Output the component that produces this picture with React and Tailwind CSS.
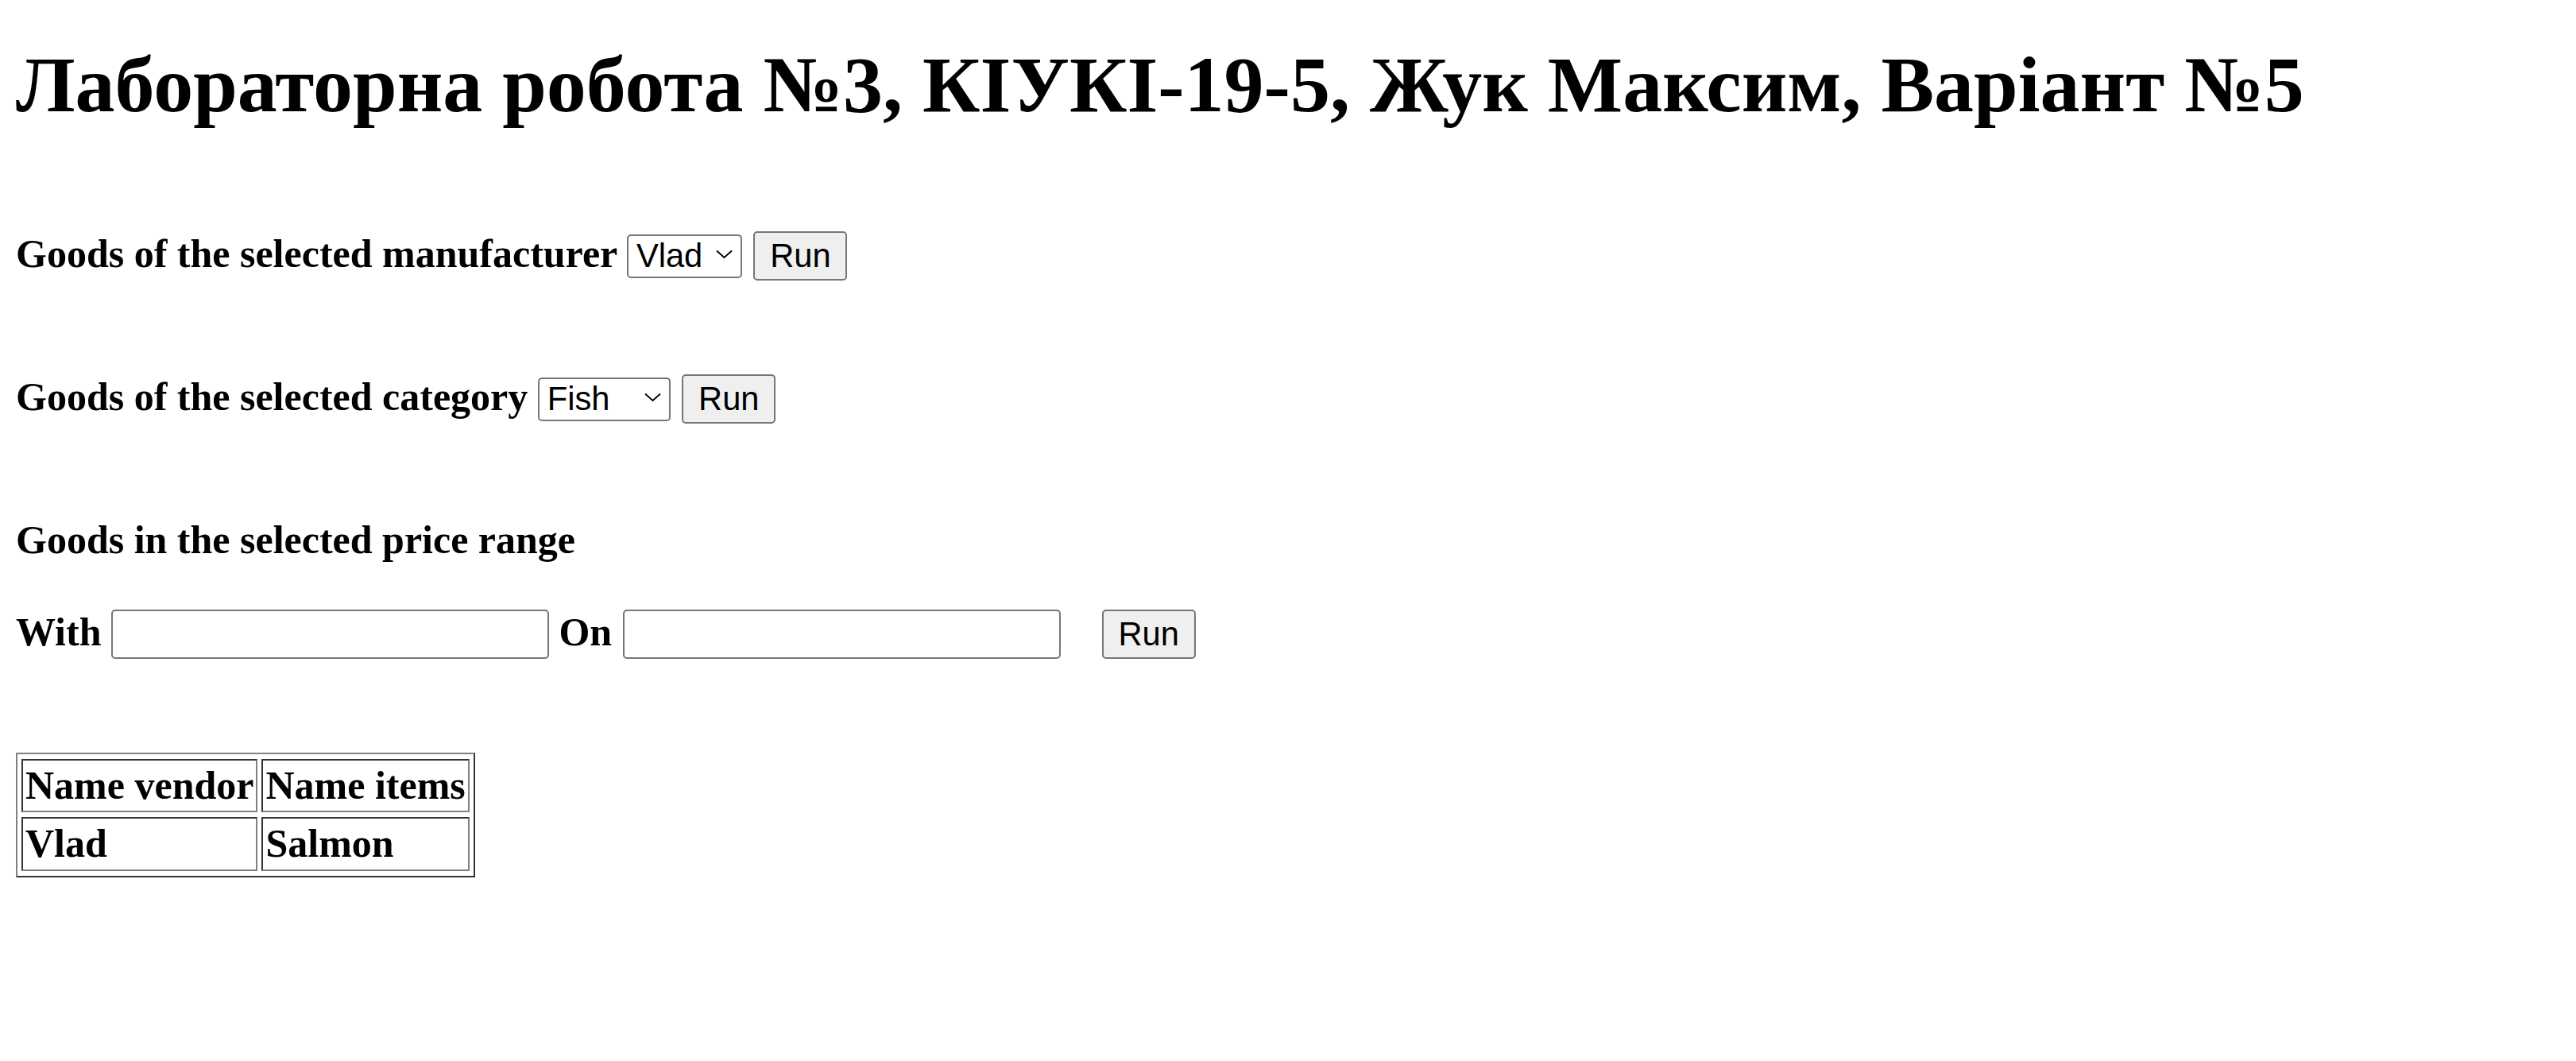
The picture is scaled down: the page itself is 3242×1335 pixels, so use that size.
import React from 'react';

const serif = "font-['Liberation_Serif','Times_New_Roman',serif]";
const sans = "font-['Liberation_Sans',Arial,sans-serif]";

function Chevron() {
  return (
    <svg
      width="21"
      height="11"
      viewBox="0 0 21 11"
      className="pointer-events-none absolute right-[12px] top-1/2 -translate-y-1/2"
    >
      <polyline points="1,1 10.5,9.5 20,1" fill="none" stroke="#000" strokeWidth="1.8" />
    </svg>
  );
}

function Picker({ value, options, className }) {
  return (
    <span className="relative inline-block">
      <select
        defaultValue={value}
        className={`appearance-none bg-white h-[55px] pl-[10px] pr-[40px] border-2 border-[#767676] rounded-[5px] text-[41.67px] font-normal leading-none text-black ${sans} ${className}`}
      >
        {options.map(o => <option key={o}>{o}</option>)}
      </select>
      <Chevron />
    </span>
  );
}

function RunButton({ className = '' }) {
  return (
    <button
      type="button"
      className={`w-[118px] h-[62px] bg-[#efefef] border-2 border-[#767676] rounded-[5px] text-[41.67px] font-normal leading-none text-black ${sans} ${className}`}
    >
      Run
    </button>
  );
}

export default function App() {
  const rows = [{ vendor: 'Vlad', item: 'Salmon' }];

  return (
    <div className={`min-h-screen bg-white text-black pl-[20px] pt-[49px] ${serif}`}>
      <h1 className="text-[100px] font-bold leading-[1.15] whitespace-nowrap">
        Лабораторна робота №3, КІУКІ-19-5, Жук Максим, Варіант №5
      </h1>

      {/* Manufacturer */}
      <div className="mt-[127px] text-[50px] font-bold leading-[1.15] whitespace-nowrap">
        Goods of the selected manufacturer{' '}
        <Picker value="Vlad" options={['Vlad', 'Ivan', 'Oleg']} className="w-[145px]" />{' '}
        <RunButton className="ml-[2px]" />
      </div>

      {/* Category */}
      <div className="mt-[118px] text-[50px] font-bold leading-[1.15] whitespace-nowrap">
        Goods of the selected category{' '}
        <Picker value="Fish" options={['Fish', 'Meat', 'Dairy', 'Bread']} className="w-[167px]" />{' '}
        <RunButton className="ml-[2px]" />
      </div>

      {/* Price range */}
      <div className="mt-[118px] text-[50px] font-bold leading-[1.15]">
        Goods in the selected price range
      </div>
      <div className="mt-[58px] text-[50px] font-bold leading-[1.15] whitespace-nowrap">
        With{' '}
        <input
          type="text"
          className={`w-[551px] h-[62px] bg-white border-2 border-[#767676] rounded-[5px] px-[6px] text-[41.67px] font-normal ${sans}`}
        />{' '}
        On{' '}
        <input
          type="text"
          className={`ml-[1px] w-[551px] h-[62px] bg-white border-2 border-[#767676] rounded-[5px] px-[6px] text-[41.67px] font-normal ${sans}`}
        />
        <RunButton className="ml-[52px]" />
      </div>

      {/* Result */}
      <table className="mt-[118px] border-separate border-spacing-x-[5px] border-spacing-y-[6px] border-2 border-t-[#808080] border-l-[#808080] border-r-[#333333] border-b-[#333333] text-[50px] font-bold leading-[1.15]">
        <thead>
          <tr>
            <th className="p-[3px] text-left font-bold border-2 border-t-[#333333] border-l-[#333333] border-r-[#808080] border-b-[#808080]">Name vendor</th>
            <th className="p-[3px] text-left font-bold border-2 border-t-[#333333] border-l-[#333333] border-r-[#808080] border-b-[#808080]">Name items</th>
          </tr>
        </thead>
        <tbody>
          {rows.map((r, i) => (
            <tr key={i}>
              <td className="p-[3px] border-2 border-t-[#333333] border-l-[#333333] border-r-[#808080] border-b-[#808080]">{r.vendor}</td>
              <td className="p-[3px] border-2 border-t-[#333333] border-l-[#333333] border-r-[#808080] border-b-[#808080]">{r.item}</td>
            </tr>
          ))}
        </tbody>
      </table>
    </div>
  );
}
